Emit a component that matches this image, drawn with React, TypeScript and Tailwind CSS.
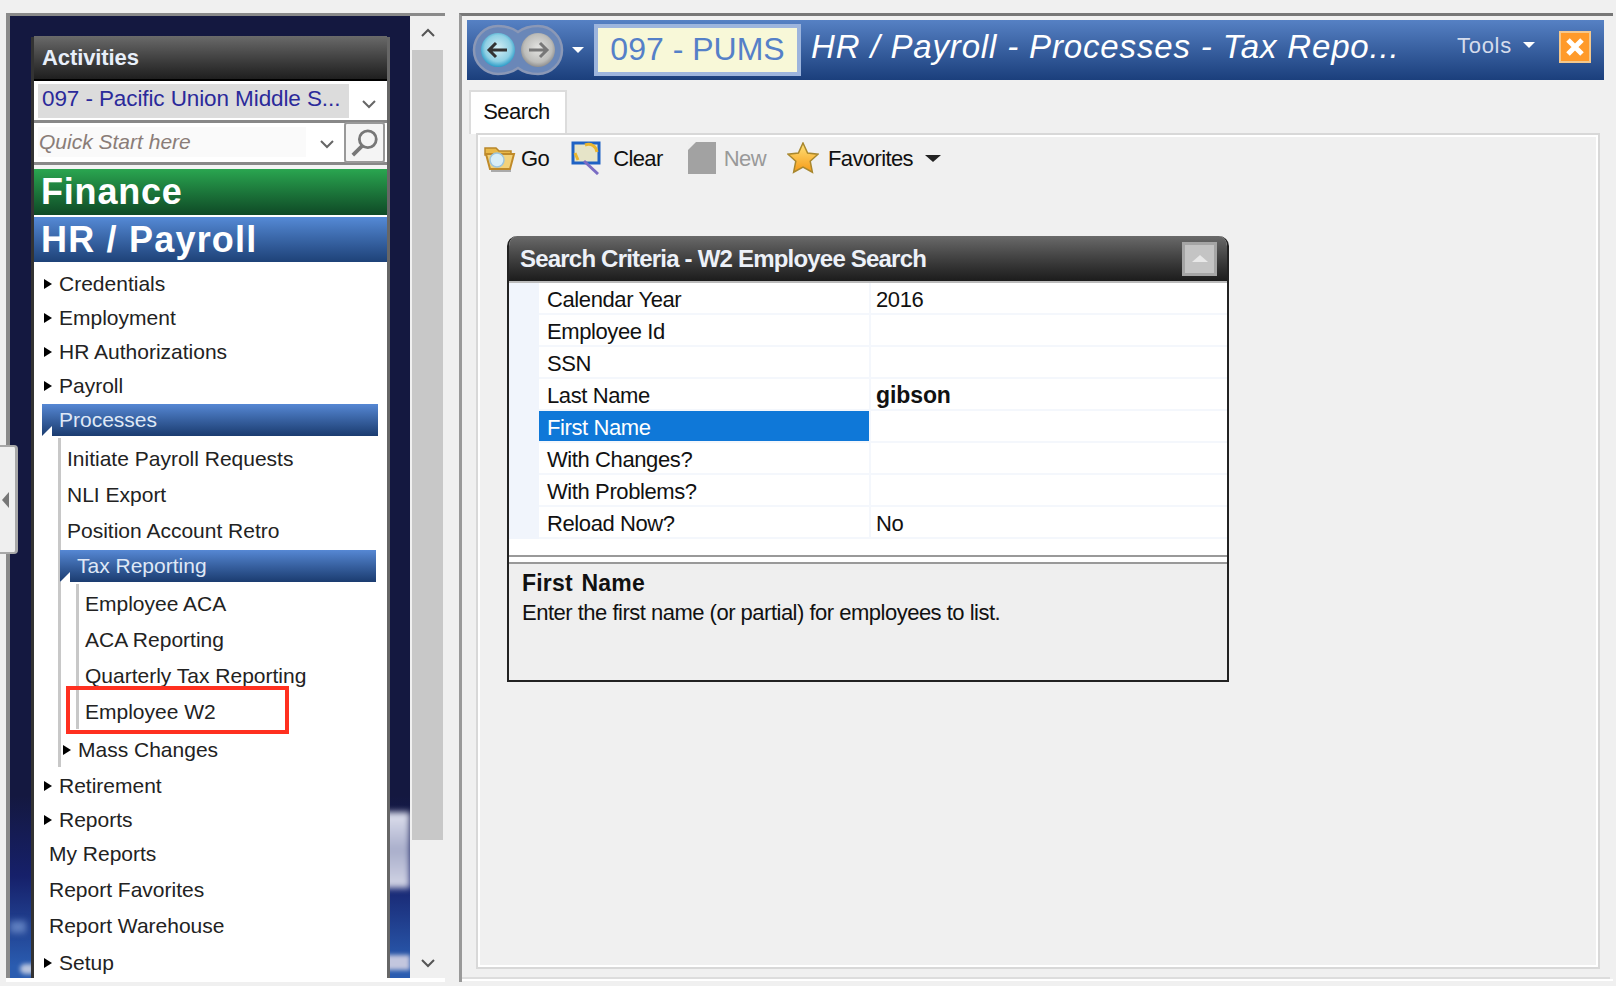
const sans = "font-['Liberation_Sans',Arial,sans-serif]"

function Arrow() {
    return (
        <span className="mr-[7px] ml-[2px] inline-block h-0 w-0 shrink-0 border-y-[5px] border-l-[8px] border-y-transparent border-l-black" />
    )
}

function TreeRow({ label, arrow, h = 'h-[34px]', pad = 'pl-0' }: { label: string; arrow?: boolean; h?: string; pad?: string }) {
    return (
        <div className={`flex items-center ${h} ${pad} pt-[1px] text-[21px] text-[#222]`}>
            {arrow && <Arrow />}
            <span>{label}</span>
        </div>
    )
}

function Bar({ label, className }: { label: string; className: string }) {
    return (
        <div className={`relative flex h-[32px] items-center bg-gradient-to-b from-[#5688d4] to-[#1b3c70] text-[21px] text-[#dfe8f6] ${className}`}>
            <span className="absolute bottom-0 left-0 h-0 w-0 border-b-[10px] border-l-[10px] border-b-white border-l-transparent" />
            {label}
        </div>
    )
}

function Chevron({ className }: { className: string }) {
    return (
        <svg viewBox="0 0 16 10" className={className} fill="none" stroke="currentColor" strokeWidth="2">
            <path d="M2 2l6 6 6-6" />
        </svg>
    )
}

function NavButtons() {
    return (
        <svg viewBox="0 0 92 52" className="h-[52px] w-[92px] shrink-0">
            <defs>
                <radialGradient id="navBlue" cx="50%" cy="45%" r="55%">
                    <stop offset="0%" stopColor="#d4eef5" />
                    <stop offset="70%" stopColor="#8fd0e4" />
                    <stop offset="100%" stopColor="#2b9cc8" />
                </radialGradient>
                <radialGradient id="navGray" cx="50%" cy="45%" r="55%">
                    <stop offset="0%" stopColor="#e4e4e2" />
                    <stop offset="75%" stopColor="#bdbdba" />
                    <stop offset="100%" stopColor="#8f8f8f" />
                </radialGradient>
            </defs>
            <path
                d="M26 2Q38 2 46 8Q54 2 66 2A24 24 0 0 1 66 50Q54 50 46 44Q38 50 26 50A24 24 0 0 1 26 2Z"
                fill="#6a87b8"
                stroke="#8b98b6"
                strokeWidth="2.500"
            />
            <circle cx="26" cy="26" r="17" fill="url(#navBlue)" />
            <circle cx="66" cy="26" r="17" fill="url(#navGray)" />
            <path d="M35 26H17M24 19l-7 7 7 7" fill="none" stroke="#333" strokeWidth="3" />
            <path d="M57 26h18M68 19l7 7-7 7" fill="none" stroke="#777" strokeWidth="3" />
        </svg>
    )
}

function GoIcon() {
    return (
        <svg viewBox="0 0 34 32" className="h-[32px] w-[34px] shrink-0">
            <path d="M2 6h11l3 3h12v4H2z" fill="#e9b949" stroke="#b8862a" strokeWidth="1.5" />
            <path d="M3 12h28l-4 15H7z" fill="#f3d27a" stroke="#c08a28" strokeWidth="2" />
            <circle cx="14" cy="18" r="7" fill="#d8eef8" stroke="#9cc4dc" strokeWidth="1.5" />
            <path d="M8 29h20" stroke="#aaa" strokeWidth="2" />
        </svg>
    )
}

function ClearIcon() {
    return (
        <svg viewBox="0 0 34 34" className="h-[34px] w-[34px] shrink-0">
            <rect x="2" y="2" width="26" height="20" fill="#e6e4c8" stroke="#1f62c4" strokeWidth="3" />
            <path d="M14 4c6-2 11 1 12 7" fill="none" stroke="#eab52e" strokeWidth="3" />
            <path d="M4 12l3 7" stroke="#eab52e" strokeWidth="3" />
            <path d="M13 20l14 13" stroke="#7a6cc4" strokeWidth="3" />
        </svg>
    )
}

function NewIcon() {
    return (
        <svg viewBox="0 0 28 32" className="h-[32px] w-[28px] shrink-0">
            <path d="M0 0h28v32H0z" fill="#a2a2a2" />
            <path d="M0 0h8L0 8z" fill="#efefef" />
        </svg>
    )
}

function StarIcon() {
    return (
        <svg viewBox="0 0 32 32" className="h-[32px] w-[32px] shrink-0">
            <defs>
                <linearGradient id="starFill" x1="0" y1="0" x2="0" y2="1">
                    <stop offset="0%" stopColor="#ffe27a" />
                    <stop offset="100%" stopColor="#f59a16" />
                </linearGradient>
            </defs>
            <path d="M16 1l4.600 10 10.400 1.200-7.800 7 2.200 11L16 25l-9.400 5.200 2.200-11-7.800-7L11.400 11z" fill="url(#starFill)" stroke="#a8872e" strokeWidth="1.5" />
        </svg>
    )
}

const criteria: [string, string][] = [
    ['Calendar Year', '2016'],
    ['Employee Id', ''],
    ['SSN', ''],
    ['Last Name', 'gibson'],
    ['First Name', ''],
    ['With Changes?', ''],
    ['With Problems?', ''],
    ['Reload Now?', 'No'],
]

export default function App() {
    return (
        <div className={`flex h-[986px] w-[1616px] overflow-hidden bg-[#f0f0f0] ${sans}`}>
            {/* collapse handle */}
            <div className="absolute top-[445px] left-0 z-10 flex h-[109px] w-[18px] items-center justify-start rounded-r-sm border-y-2 border-r-[3px] border-[#a8a8a8] bg-[#efefef]">
                <span className="ml-[2px] h-0 w-0 border-y-[8px] border-r-[7px] border-y-transparent border-r-[#777]" />
            </div>

            {/* left panel */}
            <div className="mt-[13px] ml-[6px] flex h-[969px] w-[439px] flex-col">
                <div className="flex h-[965px] border-t-[3px] border-l-4 border-[#8a8a8a]">
                    <div className="relative h-full w-[400px] overflow-hidden bg-[linear-gradient(to_bottom,#141840_0,#141840_780px,#16206a_860px,#2a5cb0_950px)] pt-[21px] pl-[21px]">
                        {/* clouds on the backdrop */}
                        <div className="absolute top-[796px] right-0 h-[76px] w-[40px] rounded-l-lg bg-gradient-to-b from-[#dfe1ee] via-[#a9aecb] to-[#d4d6e6] blur-[3px]" />
                        <div className="absolute top-[939px] right-0 h-[15px] w-[40px] bg-[#c3c6de] blur-[2px]" />
                        <div className="absolute top-[905px] left-0 h-[12px] w-[16px] bg-[#5f7fc0] blur-[3px]" />
                        <div className="absolute top-[948px] left-[10px] h-[10px] w-[14px] rounded-l-full bg-[#b8c4de] blur-[2px]" />
                        <div className="relative flex h-full w-[359px] flex-col border-x-[3px] border-r-[#666] border-l-[#333]">
                            <div className="-mt-[1px] flex h-[43px] items-center bg-gradient-to-b from-[#6a6a6a] to-[#1f1f1f] pl-[8px] text-[22px] font-bold tracking-[-0.1px] text-[#e8effa]">
                                Activities
                            </div>
                            <div className="flex h-[44px] border-t-2 border-b-[3px] border-t-black border-b-[#888] bg-white pt-[3px] pl-[4px]">
                                <div className="h-[34px] w-[311px] truncate bg-[#dcdcdc] pl-[4px] text-[22.500px] leading-[30px] tracking-[-0.1px] text-[#2b2a9a]">
                                    097 - Pacific Union Middle S...
                                </div>
                                <Chevron className="mt-[15px] ml-[12px] h-[10px] w-[16px] text-[#666]" />
                            </div>
                            <div className="flex h-[42px] border-b-[3px] border-b-[#888] bg-white pl-[4px]">
                                <div className="mt-[4px] h-[30px] w-[268px] bg-[#fafafa] pl-[1px] text-[21px] leading-[30px] text-[#8a7d78] italic">
                                    Quick Start here
                                </div>
                                <Chevron className="mt-[16px] ml-[13px] h-[10px] w-[16px] text-[#666]" />
                                <div className="-mt-[1px] ml-[9px] flex h-[41px] w-[41px] items-center justify-center rounded-[3px] border-2 border-[#999] bg-[#f4f4f4]">
                                    <svg viewBox="0 0 32 32" className="h-[30px] w-[30px] text-[#777]" fill="none" stroke="currentColor">
                                        <circle cx="19" cy="12" r="9" strokeWidth="3" />
                                        <path d="M13 19L3 29" strokeWidth="4" />
                                    </svg>
                                </div>
                            </div>
                            <div className="h-[4px] bg-[#f4f4f4]" />
                            <div className="flex h-[46px] items-center bg-gradient-to-b from-[#2aa650] to-[#0f4a26] pl-[7px] text-[36px] font-bold tracking-[0.8px] text-white">
                                Finance
                            </div>
                            <div className="flex h-[47px] items-center border-t-2 border-white bg-gradient-to-b from-[#558ad6] to-[#1e4278] pl-[7px] text-[36px] font-bold tracking-[1.2px] text-white">
                                HR / Payroll
                            </div>

                            <div className="relative min-h-0 flex-1 bg-white pt-[4px] pr-[9px] pl-[8px]">
                                <TreeRow label="Credentials" arrow />
                                <TreeRow label="Employment" arrow />
                                <TreeRow label="HR Authorizations" arrow />
                                <TreeRow label="Payroll" arrow />
                                <Bar label="Processes" className="mt-[2px] pl-[17px]" />
                                <div className="mt-[2px] ml-[16px] flex flex-col border-l-[3px] border-[#c8c8c8] pt-[2px]">
                                    <TreeRow label="Initiate Payroll Requests" h="h-[36px]" pad="pl-[6px]" />
                                    <TreeRow label="NLI Export" h="h-[36px]" pad="pl-[6px]" />
                                    <TreeRow label="Position Account Retro" h="h-[36px]" pad="pl-[6px]" />
                                    <Bar label="Tax Reporting" className="mt-[2px] mr-[2px] -ml-[1px] pl-[17px]" />
                                    <div className="mt-[2px] ml-[15px] flex flex-col border-l-[3px] border-[#c8c8c8] pt-[1px]">
                                        <TreeRow label="Employee ACA" h="h-[36px]" pad="pl-[6px]" />
                                        <TreeRow label="ACA Reporting" h="h-[36px]" pad="pl-[6px]" />
                                        <TreeRow label="Quarterly Tax Reporting" h="h-[36px]" pad="pl-[6px]" />
                                        <TreeRow label="Employee W2" h="h-[36px]" pad="pl-[6px]" />
                                    </div>
                                    <div className="mt-[2px]">
                                        <TreeRow label="Mass Changes" arrow h="h-[36px]" />
                                    </div>
                                </div>
                                <div className="mt-[1px]">
                                    <TreeRow label="Retirement" arrow />
                                    <TreeRow label="Reports" arrow />
                                    <TreeRow label="My Reports" h="h-[35px]" pad="pl-[7px]" />
                                    <TreeRow label="Report Favorites" h="h-[36px]" pad="pl-[7px]" />
                                    <TreeRow label="Report Warehouse" h="h-[36px]" pad="pl-[7px]" />
                                    <div className="mt-[2px]">
                                        <TreeRow label="Setup" arrow />
                                    </div>
                                </div>
                                {/* callout around Employee W2 */}
                                <div className="absolute top-[424px] left-[32px] h-[48px] w-[223px] border-4 border-[#ff3020]" />
                            </div>
                        </div>
                    </div>
                    <div className="flex w-[35px] flex-col">
                        <div className="flex h-[34px] items-center justify-center bg-[#f0f0f0]">
                            <Chevron className="h-[10px] w-[16px] rotate-180 text-[#555]" />
                        </div>
                        <div className="mx-[2px] h-[790px] bg-[#c8c8c8]" />
                        <div className="flex flex-1 items-end justify-center bg-[#f0f0f0] pb-[10px]">
                            <Chevron className="h-[10px] w-[16px] text-[#555]" />
                        </div>
                    </div>
                </div>
                <div className="h-[4px] bg-white" />
            </div>

            {/* right panel */}
            <div className="mt-[13px] ml-[14px] flex h-[969px] w-[1154px] flex-col border-t-[3px] border-l-[3px] border-t-[#777] border-l-[#999] pt-[4px]">
                <div className="ml-[5px] flex h-[60px] w-[1137px] items-center bg-gradient-to-b from-[#5681c4] to-[#1b3f7c] pl-[5px]">
                    <NavButtons />
                    <span className="ml-[8px] h-0 w-0 border-x-[6px] border-t-[6px] border-x-transparent border-t-white" />
                    <div className="ml-[10px] flex h-[52px] w-[207px] items-center justify-center border-4 border-[#9db5dd] bg-[#f8f8d8] pb-[2px] text-[32px] text-[#5580c8]">
                        097 - PUMS
                    </div>
                    <div className="ml-[10px] w-[600px] -translate-y-[3px] text-[33px] tracking-[0.85px] whitespace-nowrap text-white italic">
                        HR / Payroll - Processes - Tax Repo...
                    </div>
                    <div className="ml-[46px] flex -translate-y-[5px] items-center text-[22px] tracking-[0.7px] text-[#d5dcec]">
                        Tools
                        <span className="ml-[11px] h-0 w-0 border-x-[6px] border-t-[6px] border-x-transparent border-t-white" />
                    </div>
                    <div className="ml-[24px] flex h-[32px] w-[32px] -translate-y-[3px] items-center justify-center border-2 border-[#f5c88c] bg-[#ff9a2a]">
                        <svg viewBox="0 0 20 20" className="h-[20px] w-[20px]" fill="none" stroke="white" strokeWidth="5">
                            <path d="M3 3l14 14M17 3L3 17" />
                        </svg>
                    </div>
                </div>

                <div className="mt-[10px] ml-[7px] flex h-[44px] w-[98px] items-center justify-center border-x-2 border-t-2 border-[#dcdcdc] bg-white pr-[3px] pb-[4px] text-[22px] tracking-[-0.5px] text-[#111]">
                    Search
                </div>
                <div className="relative -mt-[1px] ml-[14px] flex h-[836px] w-[1124px] flex-col border-2 border-[#d8d8d8] shadow-[inset_2px_2px_0_#fff,inset_-2px_-2px_0_#fff]">
                    <div className="flex h-[40px] items-center pt-[6px] pl-[5px] text-[22px] tracking-[-0.6px] text-[#111]">
                        <GoIcon />
                        <span className="ml-[4px]">Go</span>
                        <span className="ml-[22px]"><ClearIcon /></span>
                        <span className="ml-[8px]">Clear</span>
                        <span className="ml-[25px]"><NewIcon /></span>
                        <span className="ml-[8px] text-[#999]">New</span>
                        <span className="ml-[21px]"><StarIcon /></span>
                        <span className="ml-[9px]">Favorites</span>
                        <span className="ml-[12px] h-0 w-0 border-x-[8px] border-t-[7px] border-x-transparent border-t-[#222]" />
                    </div>

                    {/* search criteria */}
                    <div className="mt-[61px] ml-[29px] flex h-[446px] w-[722px] flex-col overflow-hidden rounded-t-[10px] border-2 border-t-0 border-[#222]">
                        <div className="flex h-[45px] shrink-0 items-center justify-between bg-gradient-to-b from-[#6a6a6a] to-[#1c1c1c] pr-[10px] pl-[11px] text-[24px] font-bold tracking-[-0.8px] text-[#edf1f8]">
                            Search Criteria - W2 Employee Search
                            <div className="flex h-[34px] w-[35px] items-center justify-center border-[3px] border-[#a5a5a5] bg-[#c4c4c4]">
                                <span className="h-0 w-0 border-x-[8px] border-b-[7px] border-x-transparent border-b-[#e8e8e8]" />
                            </div>
                        </div>
                        <div className="flex h-[276px] shrink-0 flex-col border-y-2 border-t-[#bbb] border-b-[#999] bg-white">
                            {criteria.map(([label, value]) => {
                                const active = label === 'First Name'
                                return (
                                    <div key={label} className="flex h-[32px] shrink-0 text-[22px] tracking-[-0.4px] text-[#111]">
                                        <div className="w-[30px] shrink-0 bg-[#f1f5fc]" />
                                        <div className={`flex w-[332px] shrink-0 items-center border-r-2 border-b-2 border-[#f4f7fc] pt-[2px] pl-[8px] ${active ? 'bg-[#0f78d8] text-white' : ''}`}>
                                            {label}
                                        </div>
                                        <div className={`flex flex-1 items-center border-b-2 border-[#f4f7fc] pt-[2px] pl-[5px] ${value === 'gibson' ? 'text-[23px] font-bold tracking-[-0.1px]' : ''}`}>
                                            {value}
                                        </div>
                                    </div>
                                )
                            })}
                        </div>
                        <div className="h-[7px] shrink-0 border-b-2 border-[#999] bg-white" />
                        <div className="flex-1 bg-[#efefef] pt-[4px] pl-[13px] text-[#111]">
                            <div className="text-[23px] leading-[30px] font-bold tracking-[0.2px] [word-spacing:2px]">First Name</div>
                            <div className="text-[22px] leading-[30px] tracking-[-0.5px]">Enter the first name (or partial) for employees to list.</div>
                        </div>
                    </div>
                </div>
                <div className="mt-[8px] h-[2px] w-[1148px] bg-[#ddd]" />
                <div className="h-[2px] w-[1151px] bg-white" />
            </div>
        </div>
    )
}
